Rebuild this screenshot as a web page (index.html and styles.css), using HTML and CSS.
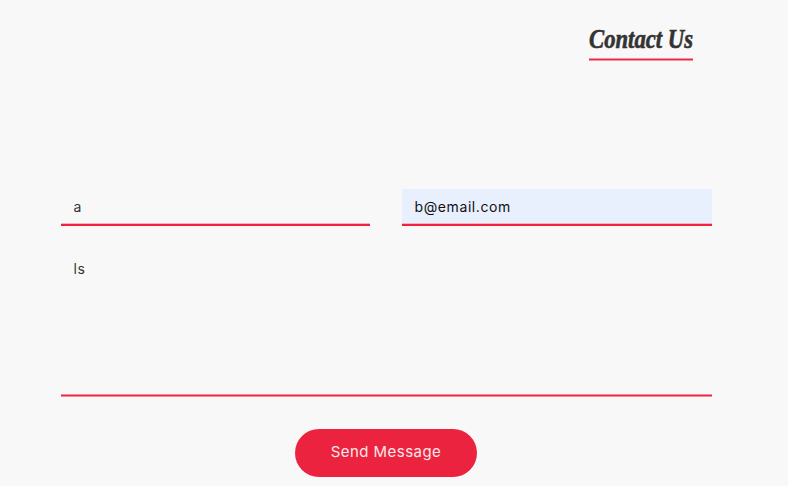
FILE: index.html
```html
<!DOCTYPE html>
<html lang="en">
<head>
<meta charset="utf-8">
<title>Contact Us</title>
<link rel="stylesheet" href="styles.css">
</head>
<body>
<section class="contact">
  <header class="contact-header">
    <h2 class="title"><span class="title-text">Contact Us</span></h2>
  </header>
  <form class="form">
    <input class="field" type="text" value="a" aria-label="Name">
    <input class="field field-filled" type="email" value="b@email.com" aria-label="Email">
    <textarea class="field message" aria-label="Message">ls</textarea>
    <button class="send" type="button">Send Message</button>
  </form>
</section>
</body>
</html>
```

FILE: styles.css
```css
* { box-sizing: border-box; }

body {
  margin: 0;
  background: #f8f8f8;
  color: #333;
  font-family: Inter, "Liberation Sans", sans-serif;
  overflow: hidden;
}

.contact { padding: 20px 76px 0 61px; }

.contact-header {
  display: flex;
  justify-content: flex-end;
  height: 169px;
  padding-right: 19px;
}

.title {
  width: 104px;
  height: 41px;
  margin: 0;
  background: linear-gradient(#f5929f 1px, #e82944 1px 2px, #f5929f 2px) bottom / 100% 3px no-repeat;
  font: italic bold 27px/38px "Liberation Serif", serif;
  white-space: nowrap;
}

.title-text {
  display: inline-block;
  transform: scaleX(0.84);
  transform-origin: left;
  -webkit-text-stroke: 0.6px #333;
}

.form {
  display: grid;
  grid-template-columns: 309px 310px;
  column-gap: 32px;
}

.field {
  width: 100%;
  height: 37px;
  margin: 0;
  padding: 0 12.5px 3px;
  border: 0;
  border-radius: 0;
  outline: 0;
  background: linear-gradient(#e9b9c1 1px, #f0223f 1px) bottom / 100% 3px no-repeat;
  color: #333;
  font: 14px/20px Inter, sans-serif;
  letter-spacing: 0.6px;
}

.field-filled { background-color: #e8effd; color: #111; }

.message {
  grid-column: 1 / -1;
  height: 139px;
  margin-top: 32px;
  padding-top: 1px;
  background-image: linear-gradient(#f58d9c 1px, #f0223f 1px 2px, #f58d9c 2px);
  resize: none;
}

.send {
  grid-column: 1 / -1;
  justify-self: center;
  width: 182px;
  height: 48px;
  margin: 32px 1px 0 0;
  padding: 0 0 2px;
  border: 0;
  border-radius: 24px;
  background: #ec233f;
  color: #fbe9eb;
  font: 15px/20px Inter, sans-serif;
  letter-spacing: 0.45px;
}
```
